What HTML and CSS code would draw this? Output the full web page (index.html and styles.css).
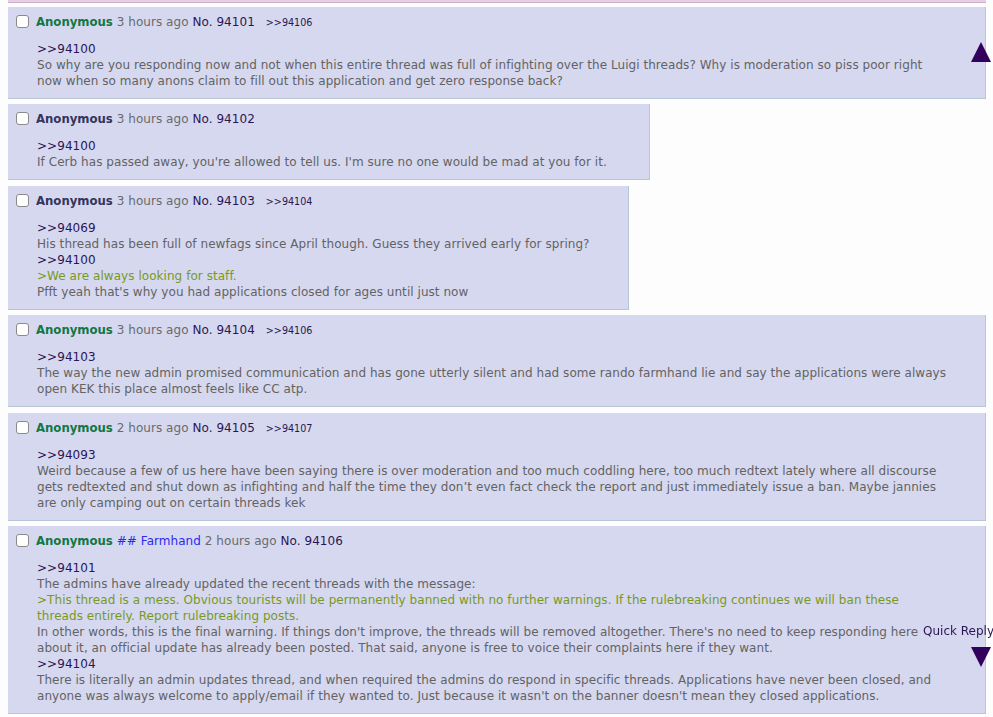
FILE: index.html
```html
<!DOCTYPE html>
<html lang="en">
<head>
<meta charset="utf-8">
<title>Thread</title>
<link rel="stylesheet" href="styles.css">
</head>
<body>
<div class="prev-post"></div>
<div class="thread">
  <div class="post">
    <div class="post-head"><span class="check"></span><span class="name">Anonymous</span> <span class="time">3 hours ago</span> <span class="no">No. 94101</span><span class="backlink">&gt;&gt;94106</span></div>
    <div class="post-body"><span class="ql">&gt;&gt;94100</span><br>So why are you responding now and not when this entire thread was full of infighting over the Luigi threads? Why is moderation so piss poor right<br>now when so many anons claim to fill out this application and get zero response back?</div>
  </div>
  <div class="post post-w2">
    <div class="post-head"><span class="check"></span><span class="name name-dark">Anonymous</span> <span class="time">3 hours ago</span> <span class="no">No. 94102</span></div>
    <div class="post-body"><span class="ql">&gt;&gt;94100</span><br>If Cerb has passed away, you're allowed to tell us. I'm sure no one would be mad at you for it.</div>
  </div>
  <div class="post post-w3">
    <div class="post-head"><span class="check"></span><span class="name name-dark">Anonymous</span> <span class="time">3 hours ago</span> <span class="no">No. 94103</span><span class="backlink">&gt;&gt;94104</span></div>
    <div class="post-body"><span class="ql">&gt;&gt;94069</span><br>His thread has been full of newfags since April though. Guess they arrived early for spring?<br><span class="ql">&gt;&gt;94100</span><br><span class="gt">&gt;We are always looking for staff.</span><br>Pfft yeah that's why you had applications closed for ages until just now</div>
  </div>
  <div class="post">
    <div class="post-head"><span class="check"></span><span class="name">Anonymous</span> <span class="time">3 hours ago</span> <span class="no">No. 94104</span><span class="backlink">&gt;&gt;94106</span></div>
    <div class="post-body"><span class="ql">&gt;&gt;94103</span><br>The way the new admin promised communication and has gone utterly silent and had some rando farmhand lie and say the applications were always<br>open KEK this place almost feels like CC atp.</div>
  </div>
  <div class="post">
    <div class="post-head"><span class="check"></span><span class="name">Anonymous</span> <span class="time">2 hours ago</span> <span class="no">No. 94105</span><span class="backlink">&gt;&gt;94107</span></div>
    <div class="post-body"><span class="ql">&gt;&gt;94093</span><br>Weird because a few of us here have been saying there is over moderation and too much coddling here, too much redtext lately where all discourse<br>gets redtexted and shut down as infighting and half the time they don’t even fact check the report and just immediately issue a ban. Maybe jannies<br>are only camping out on certain threads kek</div>
  </div>
  <div class="post">
    <div class="post-head"><span class="check"></span><span class="name">Anonymous</span> <span class="cap">## Farmhand</span> <span class="time">2 hours ago</span> <span class="no">No. 94106</span></div>
    <div class="post-body"><span class="ql">&gt;&gt;94101</span><br>The admins have already updated the recent threads with the message:<br><span class="gt">&gt;This thread is a mess. Obvious tourists will be permanently banned with no further warnings. If the rulebreaking continues we will ban these<br>threads entirely. Report rulebreaking posts.</span><br>In other words, this is the final warning. If things don't improve, the threads will be removed altogether. There's no need to keep responding here<br>about it, an official update has already been posted. That said, anyone is free to voice their complaints here if they want.<br><span class="ql">&gt;&gt;94104</span><br>There is literally an admin updates thread, and when required the admins do respond in specific threads. Applications have never been closed, and<br>anyone was always welcome to apply/email if they wanted to. Just because it wasn't on the banner doesn't mean they closed applications.</div>
  </div>
</div>

<a class="nav-up" href="#"><svg width="20" height="20" viewBox="0 0 20 20"><polygon points="10,0 20,20 0,20" fill="#33005c"/></svg></a>
<a class="quick-reply" href="#">Quick Reply</a>
<a class="nav-down" href="#"><svg width="20" height="20" viewBox="0 0 20 20"><polygon points="0,0 20,0 10,20" fill="#33005c"/></svg></a>
</body>
</html>
```

FILE: styles.css
```css
html, body {
  margin: 0;
  padding: 0;
  background: #fdfdfd;
}
body {
  font-family: "DejaVu Sans", Verdana, sans-serif;
  font-size: 12px;
  letter-spacing: 0.05px;
  line-height: 16px;
  color: #636363;
  padding: 0 7px 0 8px;
}
.prev-post {
  height: 2px;
  background: #e6d0e3;
  border-bottom: 1px solid #cfafcb;
  margin-bottom: 4px;
}
.thread {
  display: flex;
  flex-direction: column;
  align-items: flex-start;
}
.post {
  box-sizing: border-box;
  width: 978px;
  background: #d6d8f0;
  border-right: 1px solid #b7c5d9;
  border-bottom: 1px solid #b7c5d9;
  padding: 7px 8px 9px 8px;
  margin-bottom: 5.4px;
}
.post-w2 { width: 642px; }
.post-w3 { width: 621px; }
.post-head {
  height: 16px;
  white-space: nowrap;
}
.check {
  display: inline-block;
  box-sizing: border-box;
  width: 13px;
  height: 13px;
  margin-right: 7px;
  vertical-align: -2px;
  background: #fff;
  border: 1px solid #8a8a8a;
  border-radius: 3px;
}
.name {
  font-weight: bold;
  font-size: 11.7px;
  letter-spacing: 0;
  color: #117743;
}
.name-dark { color: #34345c; }
.cap { color: #2a2af0; }
.time { color: #6a6a6a; }
.no { color: #2b1652; }
.backlink {
  color: #2b1652;
  font-size: 9.6px;
  letter-spacing: 0;
  margin-left: 11px;
}
.post-body {
  margin: 11px 4px 0 21px;
}
.ql { color: #2b1652; }
.gt { color: #789922; }
.nav-up, .nav-down, .quick-reply {
  position: fixed;
  text-decoration: none;
}
.nav-up { top: 42px; left: 971px; }
.nav-down { top: 647px; left: 971px; }
.nav-up svg, .nav-down svg { display: block; }
.quick-reply {
  top: 623px;
  left: 923px;
  font-size: 12px;
  letter-spacing: 0;
  color: #2b1652;
  white-space: nowrap;
}
```
